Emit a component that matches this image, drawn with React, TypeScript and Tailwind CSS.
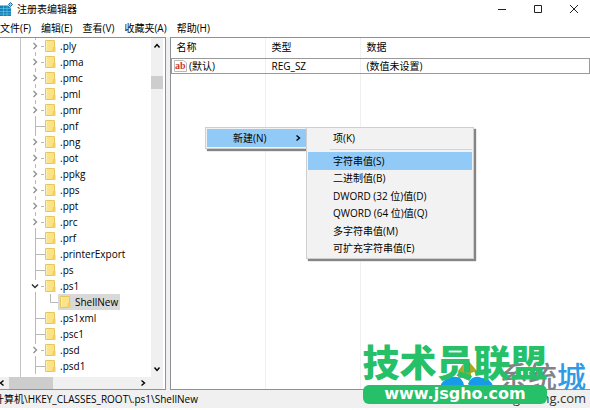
import React from "react";
import clsx from "clsx";

type Kind = "closed" | "open" | "leaf" | "child";

const keys: { name: string; kind: Kind }[] = [
  { name: ".ply", kind: "closed" },
  { name: ".pma", kind: "closed" },
  { name: ".pmc", kind: "closed" },
  { name: ".pml", kind: "closed" },
  { name: ".pmr", kind: "closed" },
  { name: ".pnf", kind: "leaf" },
  { name: ".png", kind: "closed" },
  { name: ".pot", kind: "closed" },
  { name: ".ppkg", kind: "closed" },
  { name: ".pps", kind: "closed" },
  { name: ".ppt", kind: "closed" },
  { name: ".prc", kind: "closed" },
  { name: ".prf", kind: "leaf" },
  { name: ".printerExport", kind: "leaf" },
  { name: ".ps", kind: "leaf" },
  { name: ".ps1", kind: "open" },
  { name: "ShellNew", kind: "child" },
  { name: ".ps1xml", kind: "leaf" },
  { name: ".psc1", kind: "leaf" },
  { name: ".psd", kind: "closed" },
  { name: ".psd1", kind: "leaf" },
];

const menus = ["文件(F)", "编辑(E)", "查看(V)", "收藏夹(A)", "帮助(H)"];

const valueTypes = [
  "字符串值(S)",
  "二进制值(B)",
  "DWORD (32 位)值(D)",
  "QWORD (64 位)值(Q)",
  "多字符串值(M)",
  "可扩充字符串值(E)",
];

function Chevron({ dir, className }: { dir: "up" | "down" | "left" | "right"; className?: string }) {
  const d = {
    up: "M1.5 5.5 4 2.5 6.5 5.5",
    down: "M1.5 2.5 4 5.5 6.5 2.5",
    left: "M5.5 1.5 2.5 4 5.5 6.5",
    right: "M2.5 1.5 5.5 4 2.5 6.5",
  }[dir];
  return (
    <svg viewBox="0 0 8 8" className={clsx("size-2 shrink-0", className)} fill="none" stroke="currentColor" strokeWidth="1.4">
      <path d={d} />
    </svg>
  );
}

function Folder() {
  return (
    <svg viewBox="0 0 11 14" className="h-3.5 w-[11px] shrink-0">
      <path d="M.5 1.5h9v11h-9z" fill="#fbe38a" stroke="#e9c65c" />
      <path d="M8 7.500h2.500V13H7z" fill="#f3cf62" />
      <path d="M1.500 2v10" stroke="#fff0b0" />
    </svg>
  );
}

function Guides({ kind }: { kind: Kind }) {
  return (
    <svg viewBox="0 0 24 16" className="h-4 w-6 shrink-0" fill="none" stroke="#b8b8b8">
      {kind === "leaf" && <path d="M14.500 0v16M15 8.500h9" />}
      {kind === "child" && <path d="M14.500 0v16" />}
      {(kind === "closed" || kind === "open") && <path d="M14.500 0v2M14.500 14v2M20 8.500h3" />}
      {kind === "closed" && <path d="M12.500 5 15.500 8 12.500 11" stroke="#8c8c8c" strokeWidth="1.300" />}
      {kind === "open" && <path d="M11 6.500 14 9.500 17 6.500" stroke="#333" strokeWidth="1.500" />}
    </svg>
  );
}

function TreeRow({ name, kind }: { name: string; kind: Kind }) {
  const child = kind === "child";
  return (
    <li className="flex h-4 items-center">
      <Guides kind={kind} />
      {child && (
        <svg viewBox="0 0 13 16" className="h-4 w-[13px] shrink-0" fill="none" stroke="#b8b8b8">
          <path d="M5.500 0v8.500H13" />
        </svg>
      )}
      <span className={clsx("flex h-4 items-center gap-1", child && "bg-[#d9d9d9] px-0.5")}>
        <Folder />
        <span>{name}</span>
      </span>
    </li>
  );
}

function MenuItem({ label, active, className }: { label: string; active?: boolean; className?: string }) {
  return (
    <button role="menuitem" className={clsx("flex items-center pl-[25px] text-left", active && "bg-[#91c9f7]", className)}>
      {label}
    </button>
  );
}

function WindowControls() {
  return (
    <div className="flex items-center gap-1 text-[#222]">
      <button aria-label="最小化" className="grid h-4 w-8 place-items-center">
        <svg viewBox="0 0 10 10" className="size-2.5" stroke="currentColor"><path d="M1 5.500h8" /></svg>
      </button>
      <button aria-label="最大化" className="grid h-4 w-8 place-items-center">
        <svg viewBox="0 0 10 10" className="size-2.5" stroke="currentColor" fill="none"><path d="M1.500 1.500h7v7h-7z" /></svg>
      </button>
      <button aria-label="关闭" className="grid h-4 w-8 place-items-center">
        <svg viewBox="0 0 10 10" className="size-2.5" stroke="currentColor"><path d="m1 1 8 8M9 1 1 9" /></svg>
      </button>
    </div>
  );
}

export default function App() {
  return (
    <div className="relative h-screen overflow-hidden bg-white pb-0.5 font-['Open_Sans','Noto_Sans_CJK_SC',sans-serif] text-[10px] leading-4 whitespace-nowrap text-black">
      <div className="flex h-full flex-col">
        <header className="flex h-[18px] shrink-0 items-center">
          <svg viewBox="0 0 13 14" className="mr-1 h-3.5 w-[13px]">
            <path d="M0 3.500h8l3 2.500v8H0z" fill="#1581b5" />
            <path d="M0 6.500h11M0 9.500h11M0 12h11M3.500 4v10M7 4v10" stroke="#5cc3ea" strokeWidth=".7" />
            <path d="m10.500.5 2 2-2 2-2-2z" fill="#7fd0ee" stroke="#176a92" />
          </svg>
          <h1 className="flex-1">注册表编辑器</h1>
          <WindowControls />
        </header>

        <nav className="flex h-[19px] shrink-0 items-center gap-2.5">
          {menus.map((m) => (
            <button key={m}>{m}</button>
          ))}
        </nav>

        <main className="flex min-h-0 flex-1 gap-1 bg-[#f0f0f0]">
          <section aria-label="注册表项" className="flex w-[166px] shrink-0 flex-col border-y border-r border-[#8e9196] bg-white pr-0.5">
            <div className="flex min-h-0 flex-1">
              <ul className="ml-5 flex-1 overflow-hidden border-l border-[#c4c4c4]">
                {keys.map((k) => (
                  <TreeRow key={k.name} {...k} />
                ))}
              </ul>
              <div className="flex w-3 flex-col items-center bg-[#f0f0f0] py-1">
                <Chevron dir="up" />
                <div className="mt-[26px] h-[13px] w-full bg-[#cdcdcd]" />
                <Chevron dir="down" className="mt-auto" />
              </div>
            </div>
            <div className="flex h-3 items-center bg-[#f0f0f0] pr-4">
              <Chevron dir="left" className="-ml-0.5" />
              <div className="ml-[3px] h-full w-11 bg-[#cdcdcd]" />
              <Chevron dir="right" className="ml-auto" />
            </div>
          </section>

          <section aria-label="值" className="relative flex-1 border-y border-l border-[#8e9196] bg-white">
            <div className="grid h-full grid-cols-[95px_95px_1fr]">
              <i className="border-r border-[#f0f0f0]" />
              <i className="border-r border-[#f0f0f0]" />
            </div>
            <table className="absolute inset-x-0 top-0 w-full table-fixed border-collapse text-left leading-[14px]">
              <colgroup>
                <col className="w-[95px]" />
                <col className="w-[95px]" />
                <col />
              </colgroup>
              <thead>
                <tr className="h-5">
                  <th className="pb-0.5 pl-[5px] font-normal">名称</th>
                  <th className="pb-0.5 pl-[5px] font-normal">类型</th>
                  <th className="pb-0.5 pl-[5px] font-normal">数据</th>
                </tr>
              </thead>
              <tbody>
                <tr className="border border-[#9a9a9a]">
                  <td>
                    <span className="flex items-center gap-0.5 pl-0.5">
                      <svg viewBox="0 0 13 12" className="h-3 w-[13px]">
                        <path d="M.5.5h9l3 2.500v8.500H.5z" fill="#fff" stroke="#b9b9b9" />
                        <text x="1" y="9" fontSize="10" fontWeight="700" fill="#d23a2a" fontFamily="Liberation Serif, serif">ab</text>
                      </svg>
                      (默认)
                    </span>
                  </td>
                  <td className="pl-[5px]">REG_SZ</td>
                  <td className="pl-[5px]">(数值未设置)</td>
                </tr>
              </tbody>
            </table>
          </section>
        </main>

        <footer className="h-[18px] shrink-0 overflow-hidden bg-[#f0f0f0] leading-[18px]">
          <span className="-ml-1.5">计算机\HKEY_CLASSES_ROOT\.ps1\ShellNew</span>
        </footer>
      </div>

      <div role="menu" className="absolute top-[127px] left-[205px] w-[102px] border border-[#cfcfcf] bg-[#f2f2f2] p-px pr-0 shadow-[2px_2px_1px_#858585]">
        <button role="menuitem" className="flex h-[18px] w-full items-center justify-between bg-[#91c9f7] pr-1 pl-[26px]">
          新建(N)
          <Chevron dir="right" />
        </button>
      </div>
      <div role="menu" className="absolute top-[127px] left-[306px] flex w-[168px] flex-col border border-[#cfcfcf] bg-[#f2f2f2] p-px shadow-[2px_2px_1px_#858585]">
        <MenuItem label="项(K)" className="h-[18px]" />
        <hr className="my-0.5 ml-[22px] border-[#d5d5d5]" />
        <div className="grid h-[105px] grid-rows-6">
          {valueTypes.map((v, i) => (
            <MenuItem key={v} label={v} active={i === 0} />
          ))}
        </div>
      </div>

      <div className="absolute right-1 bottom-1 flex flex-col items-end">
        <div className="flex items-end text-[29px] leading-[26px] font-medium text-[#808285]">
          <svg viewBox="0 0 52 32" className="mr-1.5 h-8 w-[52px]">
            <path d="M17 13 26 1l10 12-6 2v5H17z" fill="#a9a82a" />
            <path d="M0 26q8-10 19-6 4 4 4 8H0zM27 26q4-10 14-6 8 0 11 8H29z" fill="#159bea" />
          </svg>
          系统<span className="text-[#2f9ae6]">城</span>
        </div>
        <span className="text-[13px] leading-4 text-[#333]">xitongcheng.com</span>
      </div>

      <div className="absolute right-[43px] bottom-1.5 flex w-[184px] flex-col items-center text-[#25c068]">
        <span className="font-['Noto_Sans_CJK_SC',sans-serif] text-[37px] leading-[48px] font-black">技术员联盟</span>
        <span className="h-[19px] w-full rounded-md bg-[#25c068] text-center font-['DejaVu_Sans',sans-serif] text-base leading-[17px] font-bold text-white">
          www.jsgho.com
        </span>
      </div>
    </div>
  );
}
